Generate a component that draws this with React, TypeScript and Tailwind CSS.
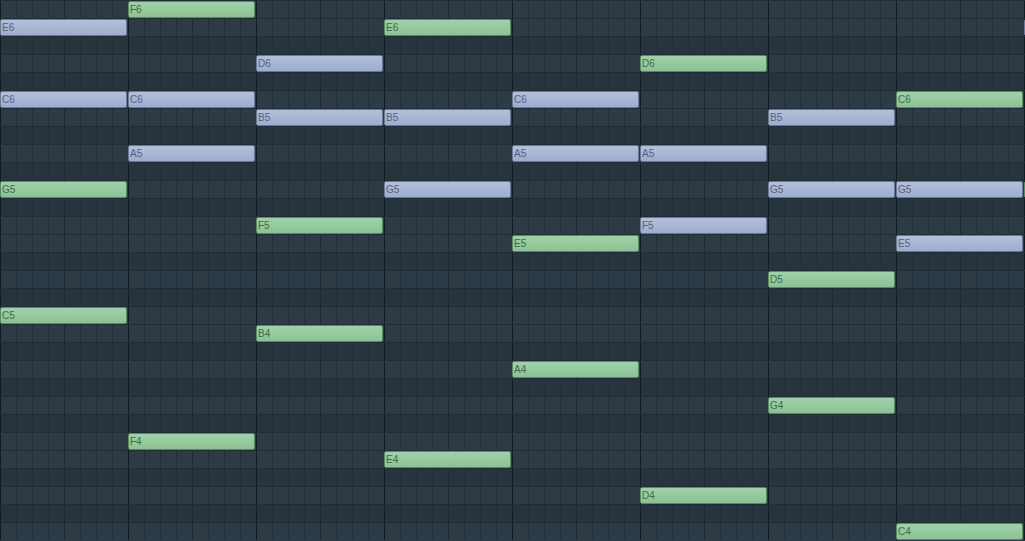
import React from "react";

const ROWS = [
  "F6","E6","D#6","D6","C#6","C6","B5","A#5","A5","G#5","G5","F#5","F5","E5","D#5","D5","C#5","C5",
  "B4","A#4","A4","G#4","G4","F#4","F4","E4","D#4","D4","C#4","C4",
];

type Note = { bar: number; g: boolean };

const NOTES: Record<string, Note[]> = {
  F6: [{ bar: 1, g: true }],
  E6: [{ bar: 0, g: false }, { bar: 3, g: true }, { bar: 8, g: false }],
  D6: [{ bar: 2, g: false }, { bar: 5, g: true }],
  C6: [{ bar: 0, g: false }, { bar: 1, g: false }, { bar: 4, g: false }, { bar: 7, g: true }],
  B5: [{ bar: 2, g: false }, { bar: 3, g: false }, { bar: 6, g: false }],
  A5: [{ bar: 1, g: false }, { bar: 4, g: false }, { bar: 5, g: false }],
  G5: [{ bar: 0, g: true }, { bar: 3, g: false }, { bar: 6, g: false }, { bar: 7, g: false }, { bar: 8, g: true }],
  F5: [{ bar: 2, g: true }, { bar: 5, g: false }],
  E5: [{ bar: 4, g: true }, { bar: 7, g: false }],
  D5: [{ bar: 6, g: true }],
  C5: [{ bar: 0, g: true }],
  B4: [{ bar: 2, g: true }],
  A4: [{ bar: 4, g: true }],
  G4: [{ bar: 6, g: true }],
  F4: [{ bar: 1, g: true }],
  E4: [{ bar: 3, g: true }],
  D4: [{ bar: 5, g: true }],
  C4: [{ bar: 7, g: true }],
};

const BARS = [0, 1, 2, 3, 4, 5, 6, 7, 8];
const STEPS = [0, 1, 2, 3, 4, 5, 6, 7];

function NoteBlock({ name, g, label }: { name: string; g: boolean; label: boolean }) {
  return (
    <div
      className={
        g
          ? "absolute top-0 left-0 w-[127px] h-[17px] rounded-[2px] border border-[#5c8965] bg-gradient-to-b from-[#a0d1a8] to-[#8bc295] flex items-center pl-[1px]"
          : "absolute top-0 left-0 w-[127px] h-[17px] rounded-[2px] border border-[#6b7895] bg-gradient-to-b from-[#b3c0db] to-[#9eadcd] flex items-center pl-[1px]"
      }
    >
      {label && (
        <span
          className={
            g
              ? "text-[10px] leading-none text-[#426a49] font-['Liberation_Sans',Arial,sans-serif]"
              : "text-[10px] leading-none text-[#55617c] font-['Liberation_Sans',Arial,sans-serif]"
          }
        >
          {name}
        </span>
      )}
    </div>
  );
}

function Row({ name }: { name: string }) {
  const black = name.includes("#");
  const notes = NOTES[name] || [];
  return (
    <div
      className={
        black
          ? "h-[18px] flex shrink-0 border-t border-[#212d36] bg-[#27343d]"
          : "h-[18px] flex shrink-0 border-t border-[#212d36] bg-[#2c3b45]"
      }
    >
      {BARS.map((b) => {
        const n = notes.find((x) => x.bar === b);
        return (
          <div key={b} className="relative flex w-[128px] shrink-0 h-full">
            {STEPS.map((s) => (
              <div
                key={s}
                className={
                  s === 0
                    ? "w-[16px] h-full border-l border-[#111b22]"
                    : s === 4
                    ? "w-[16px] h-full border-l border-[#1e2931]"
                    : "w-[16px] h-full border-l border-[#232f38]"
                }
              />
            ))}
            {n && <NoteBlock name={name} g={n.g} label={b < 8} />}
          </div>
        );
      })}
    </div>
  );
}

export default function App() {
  return (
    <div className="w-[1025px] h-[541px] overflow-hidden bg-[#2c3b45] flex flex-col">
      {ROWS.map((r) => (
        <Row key={r} name={r} />
      ))}
    </div>
  );
}
